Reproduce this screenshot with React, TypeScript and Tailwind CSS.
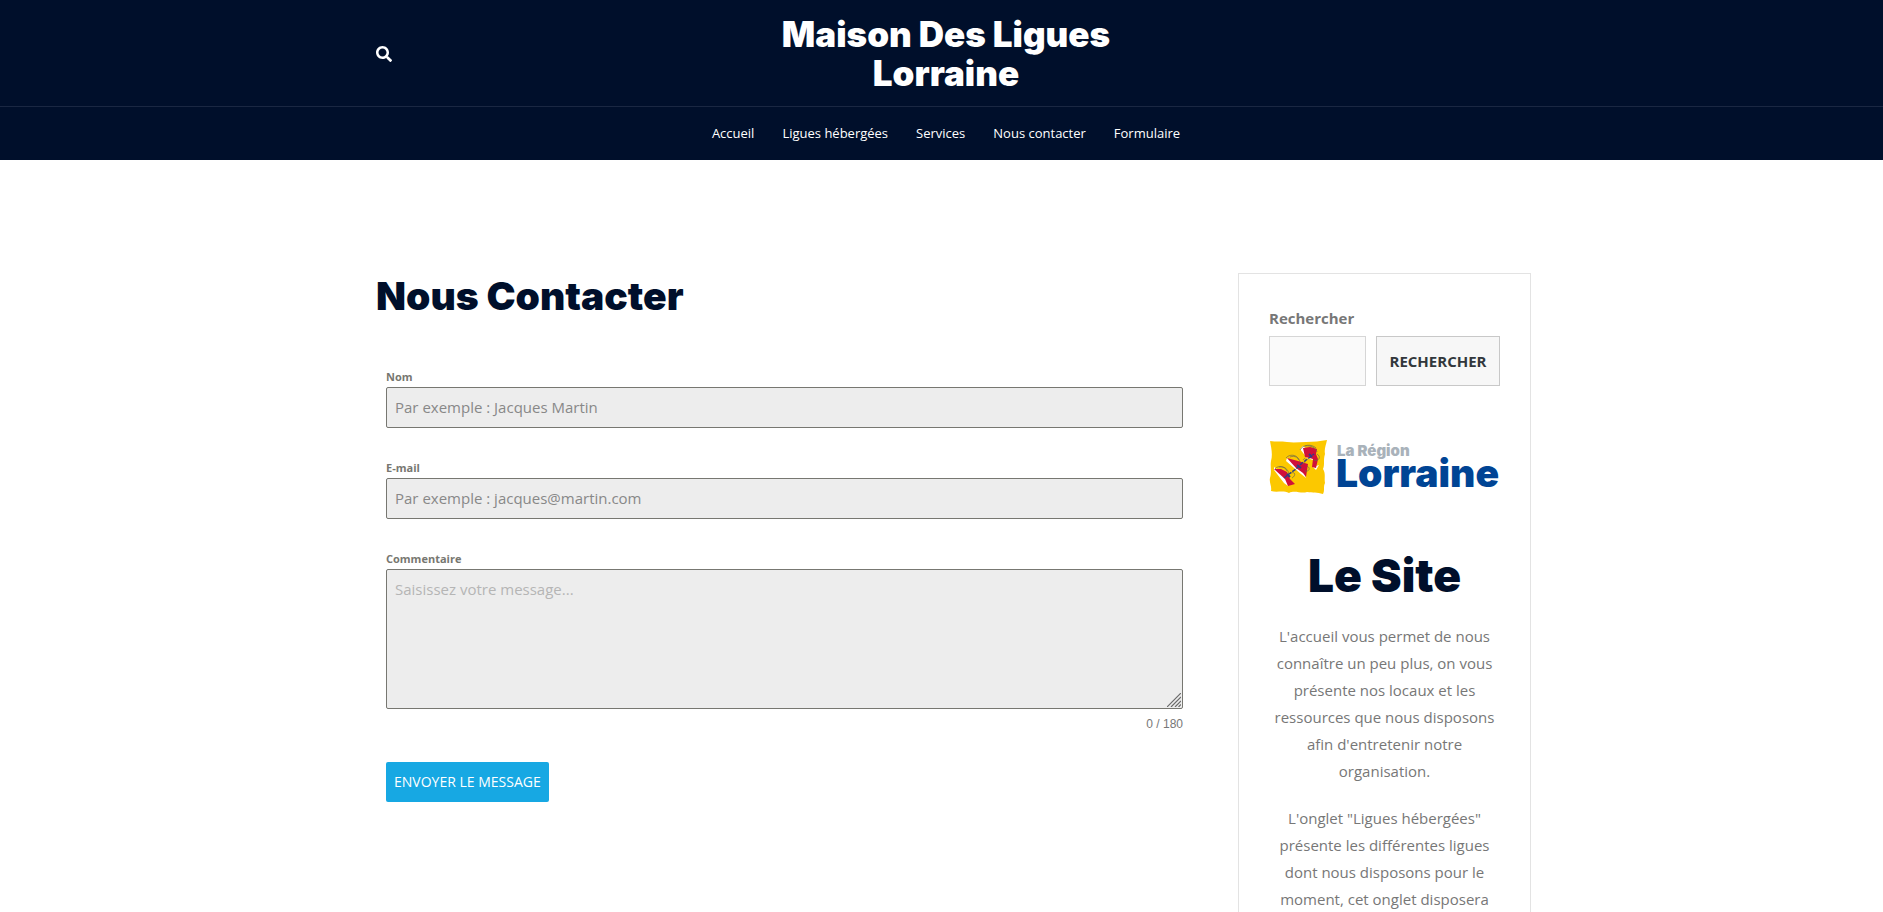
import { useState } from "react";
import { FaSearch } from "react-icons/fa";

const links = ["Accueil", "Ligues hébergées", "Services", "Nous contacter", "Formulaire"];

const fieldClass =
  "block w-full rounded-xs border border-[#777771] bg-[#ededed] px-2 text-[15px] text-[#333333] placeholder:text-[#888888]";
const labelClass = "block text-[11px] font-bold leading-4 text-[#777771]";

function RegionLogo() {
  return (
    <svg viewBox="0 0 231 55" className="block w-full overflow-visible" role="img" aria-label="La Région Lorraine">
      <path
        d="M1 1 C7 2 12 1 18 2 C25 3 31 2 37 2 C45 2 51 1 58 0 C57 5 55 9 56 14 C54 20 56 24 54 29 C57 34 55 38 56 43 C54 47 56 50 54 54 C48 52 44 53 38 52 C32 54 26 50 20 53 C14 50 8 53 2 51 C3 46 0 43 1 38 C3 31 1 27 2 21 C4 14 2 7 1 1Z"
        fill="#fcc800"
      />
      <path d="M34 6 L31 9 L38 18 L44 20 L42 12Z M18 18 L17 21 L32 34 L37 38 L34 28Z M5 27 L5 30 L15 43 L19 46 L18 36Z M44 27 L47 30 L50 25Z" fill="#fff" />
      <path
        d="M34 8 L41 7 L48 9 L47 14 L49 19 L47 28 L43 27 L44 19 L36 17Z M18 18 L29 21 L39 24 L37 37 L34 33 L27 28Z M5 29 L12 29 L18 32 L21 39 L26 44 L19 46 L16 39Z"
        fill="#d0103a"
      />
      <path
        d="M31 10 C34 4 43 4 47 8 M36 6 C42 5 47 8 48 12 M48 14 C53 17 49 22 45 20 M17 18 C20 14 28 14 30 20 M21 17 C26 15 30 18 31 22 M38 26 C42 28 40 32 36 31 M6 29 C9 25 16 26 18 31 M10 27 C15 26 19 29 20 34 M20 34 C27 30 27 36 23 38 M34 20 C37 16 38 22 34 24"
        fill="none"
        stroke="#6d6a4a"
        strokeWidth="0.7"
      />
      <path d="M15 38 L20 34 L27 29 L33 23 L40 18 L45 14" fill="none" stroke="#2e3f85" strokeWidth="1.4" strokeDasharray="4 1.200" />
      <path d="M18 34 l3 3 M28 25 l4 3 M40 14 l3 3" stroke="#2e3f85" strokeWidth="2" />
      <text x="68" y="16" fontFamily="Inter, sans-serif" fontWeight="900" fontSize="15" fill="#a9b2ba">La Région</text>
      <text x="67" y="47" fontFamily="Inter, sans-serif" fontWeight="900" fontSize="39" fill="#004494">Lorraine</text>
    </svg>
  );
}

export default function App() {
  const [message, setMessage] = useState("");
  return (
    <div className="h-screen overflow-hidden bg-white font-['Open_Sans',sans-serif] text-[#777777]">
      <header className="bg-[#000f2b] text-white">
        <div className="border-b border-[#1a2742]">
          <div className="mx-auto grid h-[106px] max-w-[1149px] grid-cols-3 items-center pt-0.5 pl-[9px]">
            <button aria-label="Rechercher" className="w-4">
              <FaSearch size={16} />
            </button>
            <a href="#" className="text-center font-[Inter,sans-serif] text-[35px] font-black leading-[39px]">
              Maison Des Ligues Lorraine
            </a>
          </div>
        </div>
        <nav className="mx-auto flex h-[53px] max-w-[1149px] items-center justify-center gap-7 pt-px pl-[9px] text-[13px]">
          {links.map((l) => (
            <a key={l} href="#">{l}</a>
          ))}
        </nav>
      </header>

      <div className="mx-auto flex max-w-[1179px] items-start gap-[45px] pl-6 pt-[113px]">
        <main className="min-w-0 flex-1">
          <h1 className="font-[Inter,sans-serif] text-[39px] font-black leading-[46px] text-[#000f2b]">Nous Contacter</h1>
          <form className="pt-[50px] pl-[10px] pr-[10px]" onSubmit={(e) => e.preventDefault()}>
            <label htmlFor="nom" className={labelClass}>Nom</label>
            <input id="nom" placeholder="Par exemple : Jacques Martin" className={`${fieldClass} mt-0.5 mb-8 h-[41px] pb-0.5`} />
            <label htmlFor="email" className={labelClass}>E-mail</label>
            <input id="email" type="email" placeholder="Par exemple : jacques@martin.com" className={`${fieldClass} mt-0.5 mb-8 h-[41px] pb-0.5`} />
            <label htmlFor="commentaire" className={labelClass}>Commentaire</label>
            <div className="relative mt-0.5">
              <textarea
                id="commentaire"
                maxLength={180}
                value={message}
                onChange={(e) => setMessage(e.target.value)}
                placeholder="Saisissez votre message..."
                className={`${fieldClass} h-[140px] resize-none py-2 placeholder:text-[#b5b5b5]`}
              />
              <svg className="pointer-events-none absolute right-0.5 bottom-0.5" width="14" height="14" viewBox="0 0 14 14" stroke="#6b6b6b" strokeWidth="1.2">
                <path d="M0 14 L14 0 M4 14 L14 4 M8 14 L14 8 M11.500 14 L14 11.500" />
              </svg>
            </div>
            <p className="mt-[7px] text-right font-['Liberation_Sans',sans-serif] text-xs">{message.length} / 180</p>
            <button className="mt-[30px] h-10 rounded-xs bg-[#17a8e3] px-2 text-sm text-white">ENVOYER LE MESSAGE</button>
          </form>
        </main>

        <aside className="w-[293px] shrink-0 border border-[#e3e3e3] px-[30px] pt-[31px] pb-8">
          <form onSubmit={(e) => e.preventDefault()}>
            <label htmlFor="recherche" className="block text-[15px] font-bold leading-[27px]">Rechercher</label>
            <div className="mt-1 flex gap-[10px]">
              <input id="recherche" type="search" className="h-[50px] min-w-0 flex-1 border border-[#d6d6d6] bg-[#fafafa] px-2" />
              <button className="h-[50px] w-[124px] border border-[#c8c8c8] bg-[#f7f7f7] text-[15px] font-bold text-[#32373c]">RECHERCHER</button>
            </div>
          </form>
          <div className="mt-[54px]">
            <RegionLogo />
          </div>
          <h2 className="mt-[55px] text-center font-[Inter,sans-serif] text-[46px] font-black leading-[50px] text-[#000f2b]">Le Site</h2>
          <p className="mt-[23px] text-center text-[15px] leading-[27px]">
            L'accueil vous permet de nous connaître un peu plus, on vous présente nos locaux et les ressources que nous disposons afin d'entretenir notre organisation.
          </p>
          <p className="mt-5 text-center text-[15px] leading-[27px]">
            L'onglet "Ligues hébergées" présente les différentes ligues dont nous disposons pour le moment, cet onglet disposera
          </p>
        </aside>
      </div>
    </div>
  );
}
